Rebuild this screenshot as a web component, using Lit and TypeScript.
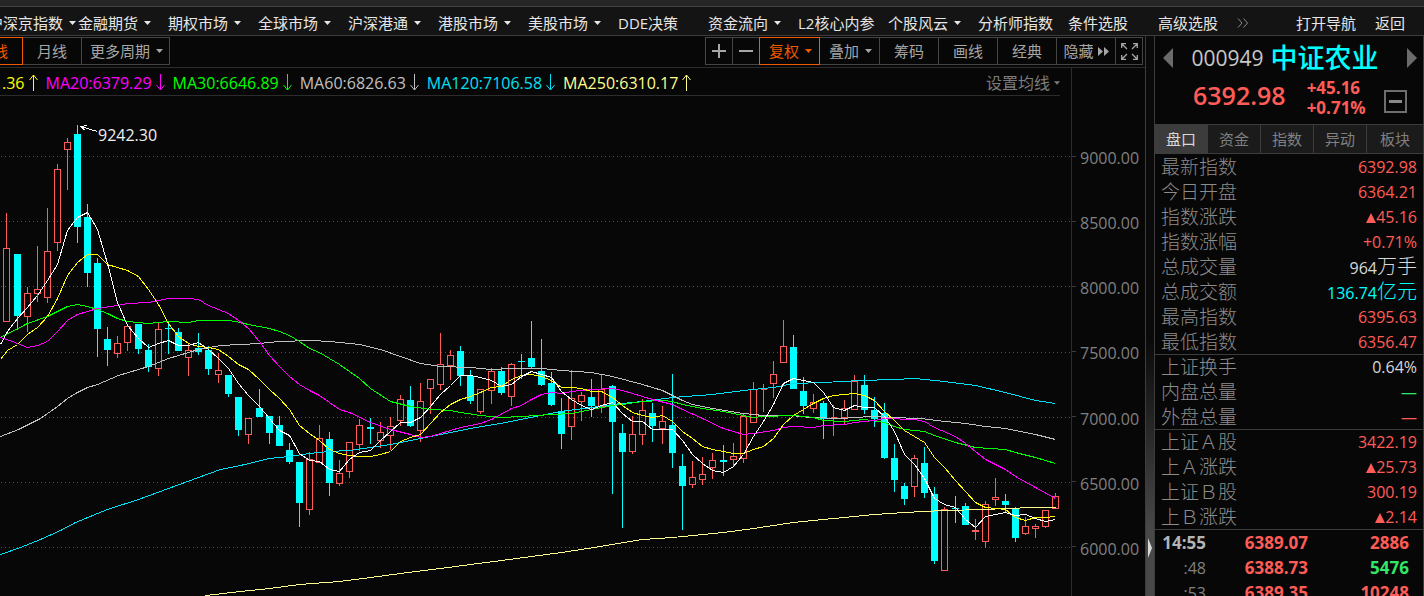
import { LitElement, html, svg, css } from "lit";
import { customElement, state } from "lit/decorators.js";
import { classMap } from "lit/directives/class-map.js";

type Candle = [x: number, high: number, top: number, bottom: number, low: number, up: 0 | 1];

const CHART_TOP = 96;

const CANDLES: Candle[] = [
  [6, 213, 248, 321, 321, 1], [17, 254, 254, 316, 330, 0], [27, 287, 293, 316, 332, 1],
  [37, 246, 289, 293, 302, 1], [47, 208, 251, 297, 303, 1], [57, 164, 169, 242, 251, 1],
  [67, 138, 142, 149, 190, 1], [77, 125, 134, 227, 243, 0], [87, 204, 217, 273, 287, 0],
  [97, 258, 263, 329, 357, 0], [107, 327, 339, 350, 366, 0], [117, 336, 343, 353, 358, 1],
  [127, 326, 326, 342, 351, 1], [138, 324, 324, 349, 354, 0], [148, 344, 350, 367, 372, 0],
  [158, 323, 329, 368, 376, 1], [168, 323, 328, 329, 354, 0], [178, 328, 332, 351, 351, 0],
  [188, 344, 350, 357, 376, 1], [198, 333, 348, 352, 355, 0], [208, 346, 350, 369, 375, 0],
  [218, 353, 370, 374, 383, 1], [228, 375, 375, 394, 397, 0], [238, 397, 397, 430, 436, 0],
  [248, 418, 418, 434, 444, 1], [259, 389, 408, 417, 417, 0], [269, 416, 416, 433, 444, 0],
  [279, 416, 425, 446, 446, 0], [289, 443, 450, 462, 464, 0], [299, 462, 462, 503, 527, 0],
  [309, 452, 459, 509, 515, 1], [319, 425, 438, 462, 462, 1], [329, 432, 439, 483, 496, 0],
  [339, 460, 473, 483, 486, 1], [349, 442, 442, 471, 478, 1], [359, 419, 425, 444, 451, 1],
  [370, 418, 427, 429, 444, 0], [380, 422, 432, 440, 448, 1], [390, 417, 426, 435, 450, 1],
  [400, 395, 399, 420, 426, 1], [410, 386, 400, 426, 427, 0], [420, 383, 401, 430, 442, 1],
  [430, 379, 379, 388, 414, 1], [440, 333, 364, 384, 390, 1], [450, 350, 355, 365, 380, 1],
  [460, 346, 351, 376, 386, 0], [470, 370, 376, 401, 404, 0], [480, 389, 389, 411, 414, 1],
  [491, 368, 371, 390, 404, 1], [501, 367, 371, 393, 395, 0], [511, 363, 364, 396, 406, 1],
  [521, 354, 361, 362, 379, 0], [531, 321, 358, 367, 368, 0], [541, 339, 371, 385, 386, 0],
  [551, 372, 383, 405, 406, 0], [561, 398, 411, 434, 449, 0], [571, 370, 398, 426, 440, 1],
  [581, 392, 395, 401, 421, 1], [591, 379, 397, 406, 417, 0], [601, 375, 389, 406, 413, 1],
  [612, 385, 386, 422, 494, 0], [622, 424, 433, 452, 528, 0], [632, 416, 434, 451, 454, 1],
  [642, 399, 410, 434, 445, 1], [652, 403, 413, 426, 442, 0], [662, 406, 421, 428, 444, 1],
  [672, 374, 425, 453, 468, 0], [682, 454, 466, 486, 530, 0], [692, 461, 477, 484, 488, 1],
  [702, 457, 474, 479, 485, 1], [712, 453, 460, 467, 479, 1], [723, 445, 460, 462, 476, 0],
  [733, 443, 456, 459, 466, 1], [743, 414, 416, 458, 463, 1], [753, 382, 389, 422, 422, 1],
  [763, 384, 389, 389, 412, 1], [773, 361, 374, 383, 398, 1], [783, 320, 346, 362, 362, 1],
  [793, 335, 347, 389, 389, 0], [803, 377, 391, 406, 414, 0], [813, 394, 402, 408, 413, 1],
  [823, 401, 403, 419, 439, 0], [833, 405, 417, 417, 436, 1], [844, 400, 408, 417, 425, 1],
  [854, 375, 381, 409, 409, 1], [864, 375, 385, 410, 414, 0], [874, 397, 410, 419, 427, 0],
  [884, 403, 413, 458, 459, 0], [894, 444, 458, 480, 492, 0], [904, 483, 486, 499, 505, 0],
  [914, 455, 458, 486, 497, 1], [924, 447, 463, 493, 498, 0], [934, 487, 494, 561, 564, 0],
  [944, 507, 509, 570, 570, 1], [955, 496, 508, 509, 523, 0], [965, 503, 506, 525, 525, 0],
  [975, 519, 530, 531, 540, 1], [985, 501, 504, 541, 548, 1], [995, 478, 497, 499, 506, 1],
  [1005, 494, 501, 505, 512, 0], [1015, 507, 509, 538, 542, 0], [1025, 517, 526, 533, 535, 1],
  [1035, 524, 526, 528, 538, 1], [1045, 510, 510, 526, 528, 1], [1055, 493, 496, 508, 508, 1],
];

const LINES: { name: string; points: string }[] = [
  {
    name: "ma250",
    points:
      "205,595 240,591 269,588 299,584 339,581 370,577 400,573 440,568 470,564 501,560 531,556 561,552 600,546 642,539 672,537 723,532 753,528 793,522 833,518 874,514 904,512 944,510 985,509 1005,508 1035,507 1055,507",
  },
  {
    name: "ma120",
    points:
      "0,554 20,547 40,539 60,530 75,522 107,509 138,499 168,488 198,477 220,469 240,465 269,458 289,456 309,453 329,451 349,450 390,444 420,438 440,434 470,428 500,423 530,417 560,411 591,407 612,404 642,401 672,397 712,394 743,390 773,387 793,383 823,382 860,380 894,379 914,378 944,381 975,385 1005,392 1035,400 1055,403",
  },
  {
    name: "ma60",
    points:
      "0,436 18,429 40,418 57,406 67,398 77,392 87,387 97,384 118,375 148,366 168,358 198,349 220,345 240,344 259,343 279,341 310,340 330,341 359,344 380,349 400,356 420,363 440,366 470,367 490,369 511,368 541,368 561,370 591,372 612,376 642,384 662,390 682,400 692,404 712,408 743,413 763,415 790,415 810,417 840,418 870,416 890,417 920,418 945,421 965,423 985,426 1005,428 1035,434 1055,439",
  },
  {
    name: "ma30",
    points:
      "0,337 27,323 47,316 67,306 77,304 87,306 97,309 107,313 117,318 127,321 148,323 168,321 188,322 198,320 228,320 240,322 248,324 269,328 279,331 289,335 299,341 309,348 319,352 339,364 359,378 370,388 390,401 410,406 430,409 450,410 460,412 480,415 501,417 521,416 551,414 571,413 591,409 612,405 622,404 642,401 662,400 672,401 682,404 702,408 723,411 743,415 753,417 763,416 793,415 813,417 823,420 844,421 864,419 884,422 894,426 904,429 924,431 934,435 955,442 975,447 1005,449 1015,452 1035,457 1055,463",
  },
  {
    name: "ma20",
    points:
      "0,337 12,341 27,347 37,345 47,341 57,331 67,320 77,314 97,308 117,305 127,303 148,302 168,298 188,298 198,299 208,305 218,309 228,313 238,320 248,328 259,341 269,355 279,366 289,376 299,384 309,390 319,395 339,409 349,412 370,422 390,429 410,434 420,437 430,436 440,433 460,427 480,423 491,419 511,408 521,405 531,399 541,394 551,392 561,393 571,391 591,389 612,388 622,390 642,396 652,399 672,404 682,409 702,418 723,428 743,434 753,433 773,430 783,427 793,426 813,427 823,425 844,424 854,422 874,420 884,418 914,419 924,421 934,427 955,436 965,443 975,451 985,459 1005,469 1015,476 1035,487 1055,498",
  },
  {
    name: "ma10",
    points:
      "0,359 7,350 17,344 27,334 37,327 47,316 57,298 67,275 77,262 87,254 97,254 107,264 117,267 127,270 138,276 148,289 158,304 168,323 178,336 188,343 198,346 208,347 218,349 228,356 238,364 248,369 259,379 269,389 279,398 289,409 299,425 309,433 319,440 329,449 339,453 349,455 359,456 370,456 380,454 390,451 400,441 410,437 420,434 430,423 440,412 450,404 460,399 470,396 480,392 491,387 501,386 511,379 521,375 531,374 541,376 551,380 561,387 571,387 581,388 591,391 601,391 612,397 622,405 632,412 642,415 652,417 662,415 672,421 682,431 692,438 702,446 712,449 723,451 733,453 743,453 753,449 763,446 773,438 783,424 793,415 803,409 813,403 823,398 833,395 844,394 854,393 864,395 874,400 884,411 894,420 904,430 914,436 924,442 934,457 944,467 955,480 965,491 975,502 985,507 995,508 1005,509 1015,517 1025,520 1035,517 1045,517 1055,516",
  },
  {
    name: "ma5",
    points:
      "0,344 7,331 17,318 27,307 37,295 47,280 57,264 67,230 77,217 87,212 97,229 107,263 117,302 127,325 138,338 148,347 158,343 168,340 178,345 188,345 198,342 208,349 218,358 228,368 238,383 248,395 259,406 269,418 279,430 289,435 299,453 309,460 319,461 329,469 339,471 349,459 359,452 370,450 380,440 390,431 400,422 410,422 420,417 430,406 440,394 450,385 460,375 470,375 480,377 491,380 501,386 511,384 521,376 531,371 541,374 551,377 561,391 571,399 581,405 591,409 601,405 612,402 622,413 632,421 642,421 652,429 662,429 672,429 682,440 692,454 702,463 712,470 723,472 733,466 743,454 753,436 763,421 773,404 783,383 793,378 803,380 813,382 823,392 833,407 844,410 854,405 864,407 874,407 884,416 894,431 904,454 914,464 924,478 934,498 944,504 955,507 965,519 975,527 985,516 995,514 1005,512 1015,515 1025,514 1035,518 1045,521 1055,519",
  },
];

const GRID_ROWS = [156, 221, 286, 352, 417, 482, 547];
const PRICES = ["9000.00", "8500.00", "8000.00", "7500.00", "7000.00", "6500.00", "6000.00"];

const FONT_STACK = css`"Open Sans", "Noto Sans CJK SC", sans-serif`;

const caret = html`<svg class="caret" width="7" height="4" viewBox="0 0 7 4" aria-hidden="true">
  <path d="M0 0h7L3.5 4z" fill="currentColor" />
</svg>`;

@customElement("main-nav")
class MainNav extends LitElement {
  static styles = css`
    :host {
      display: block;
      border-top: 6px solid #262626;
    }
    .bar {
      display: flex;
      align-items: center;
      height: 28px;
      background: #141414;
      border-top: 1px solid #414141;
      border-bottom: 1px solid #3c3c3c;
      overflow: hidden;
      white-space: nowrap;
    }
    .menu {
      display: grid;
      grid-auto-flow: column;
      grid-auto-columns: 90px;
      margin-left: -12px;
    }
    a {
      display: flex;
      align-items: center;
      gap: 6px;
      font: 15px/20px ${FONT_STACK};
      color: #e6e6e6;
      text-decoration: none;
      padding-top: 4px;
    }
    a.more {
      color: #8a8a8a;
      margin-left: -11px;
    }
    .end {
      display: flex;
      gap: 19px;
      margin-left: auto;
      padding-right: 19px;
    }
  `;

  private items: [string, boolean][] = [
    ["沪深京指数", true], ["金融期货", true], ["期权市场", true], ["全球市场", true],
    ["沪深港通", true], ["港股市场", true], ["美股市场", true], ["DDE决策", false],
    ["资金流向", true], ["L2核心内参", false], ["个股风云", true], ["分析师指数", false],
    ["条件选股", false], ["高级选股", false],
  ];

  render() {
    return html`<nav class="bar">
      <div class="menu">
        ${this.items.map(([label, drop]) => html`<a href="#">${label}${drop ? caret : ""}</a>`)}
      </div>
      <a class="more" href="#" aria-label="更多">
        <svg width="12" height="10" viewBox="0 0 12 10" fill="none" stroke="currentColor">
          <path d="M1 .5 5 5 1 9.5M6.500 .5l4 4.500-4 4.500" />
        </svg>
      </a>
      <div class="end"><a href="#">打开导航</a><a href="#">返回</a></div>
    </nav>`;
  }
}

@customElement("chart-toolbar")
class ChartToolbar extends LitElement {
  static styles = css`
    :host {
      display: flex;
      justify-content: space-between;
      padding: 1px 2px 2px 0;
      overflow: hidden;
    }
    .group {
      display: flex;
    }
    .periods {
      margin-left: -37px;
    }
    button {
      box-sizing: border-box;
      display: flex;
      align-items: center;
      justify-content: center;
      gap: 6px;
      width: 60px;
      height: 28px;
      margin: 0 -1px 0 0;
      padding: 0;
      border: 1px solid #454545;
      background: none;
      color: #a6a6a6;
      font: 15px/20px ${FONT_STACK};
      white-space: nowrap;
    }
    button:last-child {
      margin-right: 0;
    }
    .icon {
      width: 28px;
    }
    .drop {
      width: 61px;
      padding-left: 2px;
    }
    .wide {
      width: 89px;
      padding-left: 2px;
    }
    .tight {
      gap: 4px;
    }
    .on {
      position: relative;
      border-color: #f05a00;
      color: #f05a00;
    }
  `;

  render() {
    return html`
      <div class="group periods">
        <button class="on">周线</button>
        <button>月线</button>
        <button class="wide">更多周期${caret}</button>
      </div>
      <div class="group">
        <button class="icon" aria-label="放大">
          <svg width="14" height="14" viewBox="0 0 14 14" stroke="currentColor" stroke-width="2">
            <path d="M7 0v14M0 7h14" />
          </svg>
        </button>
        <button class="icon" aria-label="缩小">
          <svg width="14" height="14" viewBox="0 0 14 14" stroke="currentColor" stroke-width="2">
            <path d="M0 7h14" />
          </svg>
        </button>
        <button class="drop on">复权${caret}</button>
        <button class="drop">叠加${caret}</button>
        <button>筹码</button>
        <button>画线</button>
        <button>经典</button>
        <button class="tight">隐藏
          <svg width="11" height="9" viewBox="0 0 11 9" fill="currentColor">
            <path d="M0 0l5 4.500-5 4.500zM6 0l5 4.500-5 4.500z" />
          </svg>
        </button>
        <button class="icon" aria-label="全屏">
          <svg width="17" height="17" viewBox="0 0 17 17" fill="none" stroke="currentColor" stroke-width="1.300">
            <path d="M.7 5V.7H5M.7.7 6 6M12 .7h4.300V5M16.300.7 11 6M.7 12v4.300H5M.7 16.300 6 11M12 16.300h4.300V12M16.300 16.300 11 11" />
          </svg>
        </button>
      </div>
    `;
  }
}

@customElement("average-legend")
class AverageLegend extends LitElement {
  static styles = css`
    :host {
      display: flex;
      align-items: center;
      gap: 8px;
      height: 25px;
      margin-right: 11px;
      padding: 2px 0 0 2px;
      border-bottom: 1px solid #2c2c2c;
      font: 16px/20px ${FONT_STACK};
      white-space: nowrap;
    }
    .item {
      display: flex;
      align-items: center;
      gap: 4px;
    }
    .ma10 { color: #ffff00; }
    .ma20 { color: #ff00ff; }
    .ma30 { color: #00ff00; }
    .ma60 { color: #c0c0c0; }
    .ma120 { color: #00e1f5; }
    .ma250 { color: #ffff8c; }
    button {
      display: flex;
      align-items: center;
      gap: 4px;
      margin-left: auto;
      padding: 0;
      border: 0;
      background: none;
      color: #7c7c7c;
      font: inherit;
    }
    .caret {
      width: 6px;
    }
  `;

  private items: [string, string, boolean][] = [
    ["ma10", ".36", true],
    ["ma20", "MA20:6379.29", false],
    ["ma30", "MA30:6646.89", false],
    ["ma60", "MA60:6826.63", false],
    ["ma120", "MA120:7106.58", false],
    ["ma250", "MA250:6310.17", true],
  ];

  render() {
    return html`
      ${this.items.map(
        ([name, text, rising]) => html`<span class="item ${name}">
          <span>${text}</span>
          <svg width="9" height="17" viewBox="0 0 9 17" fill="none" stroke="currentColor">
            <path d=${rising ? "M4.500 17V1M.5 6l4-5 4 5" : "M4.500 0v16M.5 11l4 5 4-5"} />
          </svg>
        </span>`
      )}
      <button>设置均线${caret}</button>
    `;
  }
}

@customElement("candle-chart")
class CandleChart extends LitElement {
  static styles = css`
    :host {
      display: block;
    }
    svg {
      display: block;
      width: 100%;
    }
    .grid line {
      stroke: #505050;
      stroke-dasharray: 1 3;
    }
    .up {
      fill: none;
      stroke: #ff5c57;
    }
    .down {
      fill: #00ffff;
    }
    polyline {
      fill: none;
    }
    .ma5 { stroke: #ffffff; }
    .ma10 { stroke: #ffff00; }
    .ma20 { stroke: #ff00ff; }
    .ma30 { stroke: #00ff00; }
    .ma60 { stroke: #c0c0c0; }
    .ma120 { stroke: #00e1f5; }
    .ma250 { stroke: #ffff8c; }
    .peak {
      fill: #f0f0f0;
      font: 16px ${FONT_STACK};
    }
    .pointer {
      fill: none;
      stroke: #ffffff;
    }
  `;

  private candle([x, high, top, bottom, low, up]: Candle) {
    if (up) {
      return svg`<path class="up" d=${`M${x + 0.5} ${high}V${top}M${x + 0.5} ${bottom}V${low}M${x - 2.5} ${top + 0.5}H${x + 3.5}V${bottom + 0.5}H${x - 2.5}Z`} />`;
    }
    return svg`<path class="down" d=${`M${x} ${high}h1V${low}h-1zM${x - 3} ${top}h7V${bottom}h-7z`} />`;
  }

  render() {
    return html`<svg viewBox="0 0 1071 500" role="img" aria-label="K线图">
      <g transform="translate(0 ${-CHART_TOP})" shape-rendering="crispEdges">
        <g class="grid">
          ${GRID_ROWS.map((y) => svg`<line x1="1" x2="1071" y1=${y + 0.5} y2=${y + 0.5} />`)}
        </g>
        ${CANDLES.map((c) => this.candle(c))}
        <g transform="translate(0.5 0.5)">
          ${LINES.map((l) => svg`<polyline class=${l.name} points=${l.points} />`)}
          <path class="pointer" d="M97 131 80 126M80 126l7-1M80 126l5 4" />
        </g>
      </g>
      <text class="peak" x="98" y="45">9242.30</text>
    </svg>`;
  }
}

interface Row {
  label: string;
  value: string;
  tone: string;
  unit?: string;
  rise?: boolean;
}

@customElement("quote-panel")
class QuotePanel extends LitElement {
  @state() private tab = 0;

  static styles = css`
    :host {
      display: block;
      border-left: 1px solid #3c3c3c;
      border-right: 1px solid #3c3c3c;
      font: 16px/24px ${FONT_STACK};
      color: #808080;
      overflow: hidden;
      white-space: nowrap;
    }
    button {
      padding: 0;
      border: 0;
      background: none;
      color: inherit;
      font: inherit;
    }
    .title {
      display: flex;
      align-items: center;
      justify-content: space-between;
      height: 40px;
      padding: 2px 6px 0 8px;
    }
    .title button {
      display: flex;
      color: #6b6b6b;
    }
    h1 {
      display: flex;
      align-items: center;
      gap: 7px;
      margin: 0 10px 0 0;
      font: 21px/36px ${FONT_STACK};
      color: #c8c8c8;
    }
    .name {
      font-size: 27px;
      font-weight: 500;
      color: #00ffff;
    }
    .quote {
      display: flex;
      align-items: flex-start;
      height: 46px;
      padding: 0 16px 0 38px;
      font-weight: 600;
    }
    .last {
      font-size: 25px;
      line-height: 34px;
    }
    .change {
      display: flex;
      flex-direction: column;
      margin-left: 21px;
      font-size: 17px;
      font-weight: 700;
      line-height: 20px;
    }
    .fold {
      box-sizing: border-box;
      display: flex;
      align-items: center;
      justify-content: center;
      width: 23px;
      height: 23px;
      margin: 12px 0 0 auto;
      border: 2px solid #6e6e6e;
      color: #8a8a8a;
    }
    .tabs {
      display: grid;
      grid-template-columns: repeat(4, 52px) 1fr;
      gap: 1px;
      border-top: 1px solid #3c3c3c;
      border-bottom: 1px solid #3c3c3c;
      background: #3c3c3c;
    }
    .tabs button {
      height: 28px;
      background: #1b1b1b;
      font-size: 15px;
      line-height: 20px;
    }
    .tabs .current {
      background: #3c3c3c;
      color: #d8d8d8;
    }
    table {
      width: 100%;
      border-collapse: collapse;
    }
    .facts tbody + tbody {
      border-top: 1px solid #3c3c3c;
    }
    th,
    td {
      box-sizing: border-box;
      height: 25px;
      padding: 1px 0 0;
      line-height: 20px;
      vertical-align: middle;
    }
    .facts th {
      padding-left: 6px;
      font-size: 19px;
      font-weight: 300;
      text-align: left;
      color: #8c8c8c;
    }
    .facts td {
      padding-right: 6px;
      text-align: right;
    }
    .unit {
      font-size: 20px;
      font-weight: 300;
    }
    .red { color: #ff5c57; }
    .green { color: #33e667; }
    .cyan { color: #00ffff; }
    .white { color: #d8d8d8; }
    .trades {
      border-top: 1px solid #3c3c3c;
      table-layout: fixed;
    }
    .trades th,
    .trades td {
      padding-top: 2px;
      text-align: right;
      font-size: 17px;
      font-weight: 700;
    }
    .trades .time {
      width: 51px;
      font-size: 16px;
      font-weight: 400;
    }
    .trades .full {
      font-size: 17px;
      font-weight: 700;
      color: #b4b4b4;
    }
    .trades .price {
      width: 102px;
    }
    .trades .volume {
      padding-right: 14px;
    }
  `;

  private groups: Row[][] = [
    [
      { label: "最新指数", value: "6392.98", tone: "red" },
      { label: "今日开盘", value: "6364.21", tone: "red" },
      { label: "指数涨跌", value: "45.16", tone: "red", rise: true },
      { label: "指数涨幅", value: "+0.71%", tone: "red" },
      { label: "总成交量", value: "964", unit: "万手", tone: "white" },
      { label: "总成交额", value: "136.74", unit: "亿元", tone: "cyan" },
      { label: "最高指数", value: "6395.63", tone: "red" },
      { label: "最低指数", value: "6356.47", tone: "red" },
    ],
    [
      { label: "上证换手", value: "0.64%", tone: "white" },
      { label: "内盘总量", value: "—", tone: "green" },
      { label: "外盘总量", value: "—", tone: "red" },
    ],
    [
      { label: "上证Ａ股", value: "3422.19", tone: "red" },
      { label: "上Ａ涨跌", value: "25.73", tone: "red", rise: true },
      { label: "上证Ｂ股", value: "300.19", tone: "red" },
      { label: "上Ｂ涨跌", value: "2.14", tone: "red", rise: true },
    ],
  ];

  private trades: [string, string, string, string][] = [
    ["14:55", "6389.07", "2886", "red"],
    [":48", "6388.73", "5476", "green"],
    [":53", "6389.35", "10248", "red"],
  ];

  render() {
    const triangle = svg`<path d="M5 0 10 10H0z" fill="currentColor" />`;
    return html`
      <div class="title">
        <button aria-label="上一个">
          <svg width="10" height="20" viewBox="0 0 10 20"><path d="M10 0v20L0 10z" fill="currentColor" /></svg>
        </button>
        <h1>000949<span class="name">中证农业</span></h1>
        <button aria-label="下一个">
          <svg width="10" height="20" viewBox="0 0 10 20"><path d="M0 0v20l10-10z" fill="currentColor" /></svg>
        </button>
      </div>
      <div class="quote red">
        <span class="last">6392.98</span>
        <span class="change"><span>+45.16</span><span>+0.71%</span></span>
        <button class="fold" aria-label="收起">
          <svg width="13" height="3" viewBox="0 0 13 3"><path d="M0 0h13v3H0z" fill="currentColor" /></svg>
        </button>
      </div>
      <div class="tabs" role="tablist">
        ${["盘口", "资金", "指数", "异动", "板块"].map(
          (t, i) => html`<button
            role="tab"
            aria-selected=${i === this.tab}
            class=${classMap({ current: i === this.tab })}
            @click=${() => (this.tab = i)}
          >${t}</button>`
        )}
      </div>
      <table class="facts">
        ${this.groups.map(
          (rows) => html`<tbody>
            ${rows.map(
              (r) => html`<tr>
                <th scope="row">${r.label}</th>
                <td class=${r.tone}>${r.rise
                  ? html`<svg width="10" height="10" viewBox="0 0 10 10" aria-label="涨">${triangle}</svg>`
                  : ""}${r.value}${r.unit ? html`<span class="unit">${r.unit}</span>` : ""}</td>
              </tr>`
            )}
          </tbody>`
        )}
      </table>
      <table class="trades">
        <tbody>
          ${this.trades.map(
            ([time, price, volume, tone]) => html`<tr>
              <th scope="row" class=${classMap({ time: true, full: !time.startsWith(":") })}>${time}</th>
              <td class="price red">${price}</td>
              <td class="volume ${tone}">${volume}</td>
            </tr>`
          )}
        </tbody>
      </table>
    `;
  }
}

@customElement("app-root")
class AppRoot extends LitElement {
  static styles = css`
    :host {
      display: flex;
      flex-direction: column;
      height: 100vh;
      overflow: hidden;
      background: #070707;
      font: 16px/20px ${FONT_STACK};
    }
    .body {
      flex: 1;
      min-height: 0;
      display: grid;
      grid-template-columns: 1fr 8px 270px;
      grid-template-rows: minmax(0, 1fr);
    }
    .work {
      min-width: 0;
      border-right: 1px solid #3c3c3c;
      overflow: hidden;
    }
    .stage {
      display: grid;
      grid-template-columns: minmax(0, 1fr) 74px;
      border-top: 1px solid #2c2c2c;
    }
    .axis {
      border-left: 1px solid #2c2c2c;
    }
    .prices {
      display: flex;
      flex-direction: column;
      justify-content: space-between;
      height: 411px;
      margin: 0;
      padding: 80px 0 0;
      list-style: none;
      color: #808080;
    }
    .prices li {
      display: flex;
      align-items: center;
      gap: 4px;
    }
    .prices li::before {
      content: "";
      width: 4px;
      height: 1px;
      margin-bottom: 4px;
      background: #3c3c3c;
    }
    .splitter {
      display: flex;
      align-items: center;
      justify-content: center;
      padding-top: 464px;
      background: linear-gradient(#0a0a0a 54%, #484848 88%);
    }
  `;

  render() {
    return html`
      <main-nav></main-nav>
      <div class="body">
        <section class="work">
          <chart-toolbar></chart-toolbar>
          <div class="stage">
            <div>
              <average-legend></average-legend>
              <candle-chart></candle-chart>
            </div>
            <div class="axis">
              <ul class="prices">
                ${PRICES.map((p) => html`<li>${p}</li>`)}
              </ul>
            </div>
          </div>
        </section>
        <div class="splitter">
          <svg width="4" height="20" viewBox="0 0 4 20" aria-hidden="true"><path d="M0 0l4 10-4 10z" fill="#d8d8d8" /></svg>
        </div>
        <quote-panel></quote-panel>
      </div>
    `;
  }
}
